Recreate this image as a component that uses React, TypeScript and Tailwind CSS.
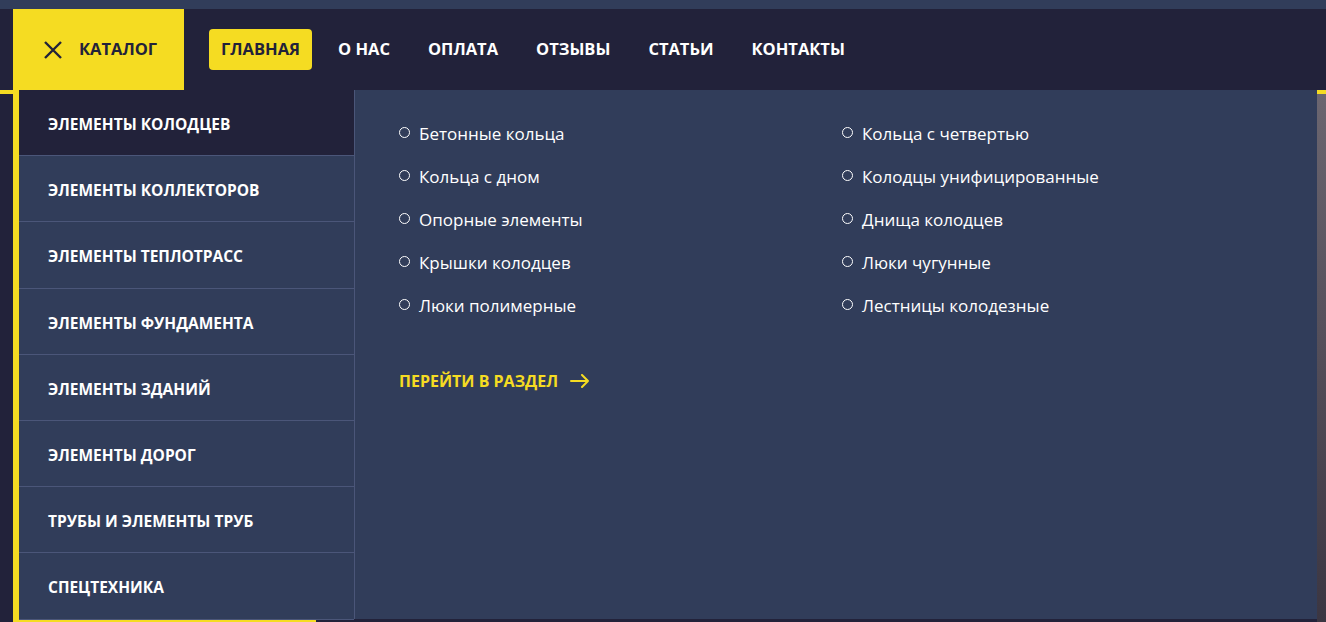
const navLinks = ['Главная', 'О нас', 'Оплата', 'Отзывы', 'Статьи', 'Контакты'];

const categories = [
    'Элементы колодцев',
    'Элементы коллекторов',
    'Элементы теплотрасс',
    'Элементы фундамента',
    'Элементы зданий',
    'Элементы дорог',
    'Трубы и элементы труб',
    'Спецтехника',
];

const leftLinks = ['Бетонные кольца', 'Кольца с дном', 'Опорные элементы', 'Крышки колодцев', 'Люки полимерные'];
const rightLinks = ['Кольца с четвертью', 'Колодцы унифицированные', 'Днища колодцев', 'Люки чугунные', 'Лестницы колодезные'];

function SubLink({ label }: { label: string }) {
    return (
        <li className="flex items-center h-[43px] gap-[9px]">
            <span className="w-[11px] h-[11px] rounded-full border-[1.5px] border-white -mt-[2px]" />
            <a href="#" className="text-[17px] font-medium text-white leading-[26px]">{label}</a>
        </li>
    );
}

export default function App() {
    return (
        <div className="relative w-full h-[622px] overflow-hidden bg-[#22223a]" style={{ fontFamily: '"Open Sans", "Noto Sans", sans-serif' }}>
            <div className="h-[9px] bg-[#313d5a]" />

            {/* header */}
            <header className="h-[81px] flex items-stretch bg-[#22223a]">
                <div className="w-[13px]" />
                <button className="w-[171px] flex items-center gap-4 pl-[30px] bg-[#f5dc22] text-[#22223a]">
                    <svg width="20" height="20" viewBox="0 0 20 20" fill="none" stroke="currentColor" strokeWidth="2.4">
                        <path d="M2 2 L18 18 M18 2 L2 18" />
                    </svg>
                    <span className="text-[16.5px] font-bold uppercase">Каталог</span>
                </button>
                <nav className="flex items-center gap-[14px] ml-[25px]">
                    {navLinks.map((link, i) => (
                        <a
                            key={link}
                            href="#"
                            className={
                                i === 0
                                    ? 'h-[41px] flex items-center px-3 rounded bg-[#f5dc22] text-[#22223a] text-[16.5px] font-bold uppercase'
                                    : 'h-[41px] flex items-center px-3 text-white text-[16.5px] font-bold uppercase'
                            }
                        >
                            {link}
                        </a>
                    ))}
                </nav>
            </header>

            {/* page content under the menu */}
            <div className="h-[532px] border-t-4 border-[#f5dc22] flex">
                <div className="flex-1" />
                <div className="w-[9px] bg-gradient-to-b from-[#6b6670] to-[#3b3642]" />
            </div>

            {/* catalog dropdown */}
            <div className="absolute left-[13px] top-[90px] w-[1304px] h-[532px] flex border-l-[6px] border-[#f5dc22]">
                <div className="w-[335px] flex flex-col">
                    <ul className="bg-[#313d5a]">
                        {categories.map((c, i) => (
                            <li
                                key={c}
                                className={
                                    i === 0
                                        ? 'h-[66.2px] pt-[4px] flex items-center pl-[29px] bg-[#22223a] border-b border-[#4b5679] text-white text-[15.5px] font-bold uppercase'
                                        : 'h-[66.2px] pt-[4px] flex items-center pl-[29px] border-b border-[#4b5679] text-white text-[15.5px] font-bold uppercase'
                                }
                            >
                                {c}
                            </li>
                        ))}
                    </ul>
                    <div className="flex-1 bg-[#f5dc22] w-[297px]" />
                </div>
                <div className="flex-1 flex flex-col">
                    <div className="h-[529px] bg-[#313d5a] border-l border-[#4b5679] pl-[44px] pt-[22px]">
                        <div className="grid grid-cols-[443px_1fr]">
                            <ul>
                                {leftLinks.map((l) => <SubLink key={l} label={l} />)}
                            </ul>
                            <ul>
                                {rightLinks.map((l) => <SubLink key={l} label={l} />)}
                            </ul>
                        </div>
                        <a href="#" className="mt-[42px] flex items-center gap-3 text-[#f5dc22] text-[16px] font-bold uppercase">
                            Перейти в раздел
                            <svg width="19" height="14" viewBox="0 0 19 14" fill="none" stroke="currentColor" strokeWidth="2" strokeLinecap="round" strokeLinejoin="round">
                                <path d="M1 7 H18 M12 1 L18 7 L12 13" />
                            </svg>
                        </a>
                    </div>
                </div>
            </div>
        </div>
    );
}
